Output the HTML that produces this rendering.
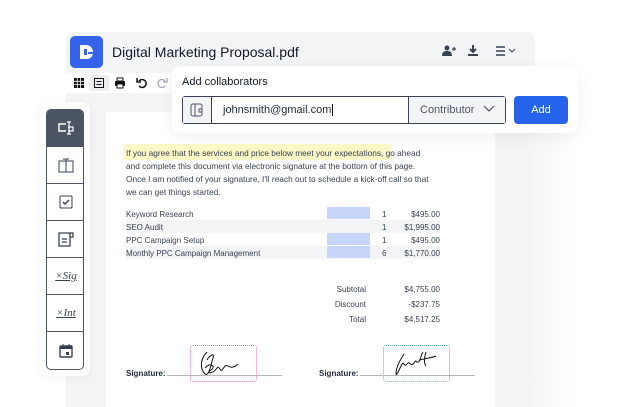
<!DOCTYPE html>
<html><head><style>
*{margin:0;padding:0;box-sizing:border-box}
html,body{width:618px;height:407px;overflow:hidden}
body{background:#fff;font-family:"Liberation Sans",sans-serif;position:relative;color:#1f2937}
.abs{position:absolute}
.win{left:66px;top:32px;width:469px;height:375px;background:#f3f4f6;border-radius:8px 8px 0 0}
.fade{left:495px;top:133px;width:80px;height:274px;background:linear-gradient(90deg,#f3f4f6 0%,#f3f4f6 40%,#fff 100%)}
.doc{left:106px;top:112px;width:389px;height:295px;background:#fff}
.t{font-size:8px;color:#374151;white-space:nowrap}
.cell{position:absolute;left:0;width:38px;height:37px;border-bottom:1px solid #4b5563;display:flex;align-items:center;justify-content:center}
</style></head><body>
<div class="abs win"></div>
<div class="abs fade"></div>
<div class="abs" style="left:70px;top:36px;width:33px;height:32px;background:#3563e9;border-radius:5px"></div>
<svg class="abs" style="left:78px;top:43px" width="18" height="18" viewBox="0 0 18 18"><path d="M2 2h6a7 7 0 0 1 7 7h-5v7H2z" fill="#fff"/><path d="M10 11h5a7 7 0 0 1-5 5z" fill="#fff"/><rect x="6" y="6" width="3" height="6" fill="#3563e9"/></svg>
<div class="abs" style="left:112px;top:44px;font-size:14px;color:#111827">Digital Marketing Proposal.pdf</div>
<svg class="abs" style="left:442px;top:45px" width="14" height="11"><circle cx="5" cy="3" r="2.5" fill="#374151"/><path d="M0 11c0-4 2-5 5-5s5 1 5 5z" fill="#374151"/><path d="M10 4h4M12 2v4" stroke="#374151" stroke-width="1.2"/></svg>
<svg class="abs" style="left:467px;top:44px" width="12" height="13"><path d="M6 1v7M3 5l3 3 3-3" stroke="#374151" stroke-width="2" fill="none"/><rect x="1" y="10" width="10" height="2" fill="#374151"/></svg>
<svg class="abs" style="left:496px;top:46px" width="24" height="10"><path d="M0 1h9M0 5h9M0 9h9" stroke="#374151" stroke-width="1.6"/><path d="M13 3l3 3 3-3" stroke="#374151" fill="none"/></svg>
<div class="abs" style="left:66px;top:73px;width:110px;height:20px;background:#fff"></div>
<div class="abs" style="left:89px;top:75px;width:20px;height:16px;background:#eceef1;border-radius:2px"></div>
<svg class="abs" style="left:74px;top:78px" width="10" height="10"><path d="M0 0h10v10H0z" fill="#111"/><path d="M3.3 0v10M6.6 0v10M0 3.3h10M0 6.6h10" stroke="#fff" stroke-width=".8"/></svg>
<svg class="abs" style="left:94px;top:78px" width="10" height="10"><rect x=".5" y=".5" width="9" height="9" stroke="#111" fill="none"/><path d="M2.5 3.5h5M2.5 6.5h5" stroke="#111"/></svg>
<svg class="abs" style="left:114px;top:77px" width="12" height="12"><rect x="3" y="1" width="6" height="3" stroke="#111" fill="none"/><rect x="1" y="4" width="10" height="5" rx="1" fill="#111"/><rect x="3" y="7" width="6" height="4" fill="#fff" stroke="#111"/></svg>
<svg class="abs" style="left:136px;top:77px" width="12" height="12"><path d="M3 4a4 4 0 1 1 0 5" stroke="#111" stroke-width="1.5" fill="none"/><path d="M1 1v4h4" stroke="#111" stroke-width="1.5" fill="none"/></svg>
<svg class="abs" style="left:156px;top:77px" width="12" height="12"><path d="M9 4a4 4 0 1 0 0 5" stroke="#9ca3af" stroke-width="1.2" fill="none"/><path d="M11 1v4H7" stroke="#9ca3af" stroke-width="1.2" fill="none"/></svg>
<div class="abs doc"></div>
<!-- popup -->
<div class="abs" style="left:172px;top:66px;width:406px;height:67px;background:#fff;border-radius:8px;box-shadow:0 4px 16px rgba(0,0,0,.06)"></div>
<div class="abs" style="left:182px;top:76px;font-size:11px;color:#111827">Add collaborators</div>
<div class="abs" style="left:182px;top:96px;width:324px;height:28px;border:1px solid #374151;border-radius:3px;background:#fff"></div>
<div class="abs" style="left:183px;top:97px;width:29px;height:26px;background:#f3f4f6;border-right:1px solid #374151"></div>
<svg class="abs" style="left:190px;top:103px" width="14" height="14"><rect x="1" y="1" width="11" height="12" rx="2" stroke="#4b5563" fill="none"/><path d="M5 1v12M9 6h3v3H9z" stroke="#4b5563" fill="none"/></svg>
<div class="abs" style="left:223px;top:104px;font-size:11px;color:#1f2937">johnsmith@gmail.com<span style="border-left:1px solid #111;margin-left:1px"></span></div>
<div class="abs" style="left:408px;top:97px;width:97px;height:26px;background:#f3f4f6;border-left:1px solid #374151"></div>
<div class="abs" style="left:420px;top:104px;font-size:11px;color:#4b5563">Contributor</div>
<svg class="abs" style="left:483px;top:105px" width="12" height="8"><path d="M1 1l5 5 5-5" stroke="#4b5563" fill="none" stroke-width="1.2"/></svg>
<div class="abs" style="left:514px;top:96px;width:54px;height:28px;background:#2563eb;border-radius:4px;color:#fff;font-size:11px;text-align:center;line-height:28px">Add</div>
<!-- sidebar -->
<div class="abs" style="left:40px;top:102px;width:50px;height:274px;background:#fff;border-radius:8px;box-shadow:0 2px 10px rgba(0,0,0,.05)"></div>
<div class="abs" style="left:46px;top:109px;width:38px;height:261px;border:1px solid #4b5563;border-radius:5px;overflow:hidden">
<div class="cell" style="top:0;background:#4b5563"><svg width="18" height="16"><path d="M9 4H2v7h7" stroke="#fff" fill="none" stroke-width="1.4"/><path d="M12 2v12M10 2h4M10 14h4M11 7h5v4h-5" stroke="#fff" fill="none" stroke-width="1.2"/></svg></div>
<div class="cell" style="top:37px"><svg width="16" height="16"><rect x="1" y="4" width="14" height="11" stroke="#374151" fill="none"/><path d="M8 2v13M5 2h6M5 15h6" stroke="#374151" fill="none"/></svg></div>
<div class="cell" style="top:74px"><svg width="14" height="14"><rect x="1" y="1" width="12" height="12" rx="1" stroke="#374151" fill="none"/><path d="M4 7l2 2 4-4" stroke="#374151" fill="none" stroke-width="1.4"/></svg></div>
<div class="cell" style="top:111px"><svg width="16" height="16"><path d="M1 2h11v13H1zM12 2h3v4h-3M4 8h5M4 11h5" stroke="#374151" fill="none" stroke-width="1.3"/></svg></div>
<div class="cell" style="top:148px;font:italic 11px 'Liberation Serif',serif;text-decoration:underline;color:#374151">×Sig</div>
<div class="cell" style="top:185px;font:italic 11px 'Liberation Serif',serif;text-decoration:underline;color:#374151">×Int</div>
<div class="cell" style="top:222px;border:0"><svg width="14" height="15"><rect x="1" y="3" width="12" height="11" rx="1" stroke="#374151" fill="none" stroke-width="1.4"/><rect x="1" y="3" width="12" height="3" fill="#374151"/><rect x="7" y="9" width="3" height="3" fill="#374151"/><path d="M4 1v3M10 1v3" stroke="#374151"/></svg></div>
</div>
<!-- doc content -->
<div class="abs" style="left:123px;top:144px;width:268px;height:16px;background:#fbf8c8"></div>
<div class="abs t" style="left:126px;top:147px;line-height:13px;font-size:8.3px">If you agree that the services and price below meet your expectations, go ahead<br>and complete this document via electronic signature at the bottom of this page.<br>Once I am notified of your signature, I'll reach out to schedule a kick-off call so that<br>we can get things started.</div>
<div class="abs" style="left:126px;top:220px;width:314px;height:13px;background:#f3f4f6"></div>
<div class="abs" style="left:126px;top:246px;width:314px;height:13px;background:#f3f4f6"></div>
<div class="abs" style="left:327px;top:207px;width:43px;height:12px;background:#c7d5fb"></div>
<div class="abs" style="left:327px;top:233px;width:43px;height:12px;background:#c7d5fb"></div>
<div class="abs" style="left:327px;top:246px;width:43px;height:12px;background:#c7d5fb"></div>
<div class="abs t" style="left:126px;top:208px;line-height:13px">Keyword Research<br>SEO Audit<br>PPC Campaign Setup<br>Monthly PPC Campaign Management</div>
<div class="abs t" style="left:382px;top:208px;line-height:13px">1<br>1<br>1<br>6</div>
<div class="abs t" style="left:380px;top:208px;width:60px;text-align:right;line-height:13px">$495.00<br>$1,995.00<br>$495.00<br>$1,770.00</div>
<div class="abs t" style="left:300px;top:282px;width:66px;text-align:right;line-height:15px">Subtotal<br>Discount<br>Total</div>
<div class="abs t" style="left:380px;top:282px;width:60px;text-align:right;line-height:15px">$4,755.00<br>-$237.75<br>$4,517.25</div>
<div class="abs" style="left:190px;top:345px;width:67px;height:37px;border:1px dotted #f472b6;border-radius:3px"></div>
<div class="abs" style="left:383px;top:345px;width:67px;height:37px;border:1px dotted #60a5fa;border-radius:3px"></div>
<div class="abs" style="left:167px;top:375px;width:115px;height:1px;background:#b5b5b5"></div>
<div class="abs" style="left:360px;top:375px;width:115px;height:1px;background:#b5b5b5"></div>
<div class="abs t" style="left:126px;top:369px;font-weight:bold;color:#1f2937">Signature:</div>
<div class="abs t" style="left:319px;top:369px;font-weight:bold;color:#1f2937">Signature:</div>
<svg class="abs" style="left:195px;top:348px" width="60" height="32"><path d="M12 4c-6 6-8 16-2 22 4 3 6-10 8-16 2-6-4-2-6 2M10 20c4-6 12-2 6 2s2 4 6-2c2-3 3 4 5 2s3-6 6-4c3 2 6 2 10-2" stroke="#111" fill="none" stroke-width="1"/></svg>
<svg class="abs" style="left:390px;top:348px" width="60" height="32"><path d="M14 6c-4 6-8 14-8 20 0 3 4-6 6-10 2-3 2 4 5 0s3 3 6 0 2-4 4-2c3 2 4-8 6-10M36 4c-2 6-2 12 0 14M30 12c6-2 12-2 16-4" stroke="#111" fill="none" stroke-width="1"/></svg>
</body></html>
